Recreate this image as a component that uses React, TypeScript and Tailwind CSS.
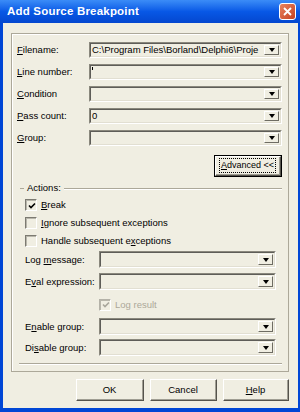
import React from 'react';

const font = { fontFamily: '"Liberation Sans", Arial, sans-serif' };

function Label({ text, u, className = '' }: { text: string; u: number; className?: string }) {
  return (
    <span className={`text-[9.5px] leading-none text-black whitespace-nowrap ${className}`}>
      {text.slice(0, u)}
      <span className="underline underline-offset-1">{text[u]}</span>
      {text.slice(u + 1)}
    </span>
  );
}

function Combo({ value, className = '' }: { value?: React.ReactNode; className?: string }) {
  return (
    <div
      className={`flex items-stretch border-t border-l border-t-[#8a887d] border-l-[#8a887d] border-b border-r border-b-white border-r-white ${className}`}
    >
      <div className="flex-1 flex items-stretch border-t border-l border-t-[#5e5d58] border-l-[#5e5d58] border-b border-r border-b-[#e2dfd2] border-r-[#e2dfd2] bg-[#f0eee2] overflow-hidden">
        <div className="flex-1 flex items-center pl-[1px] text-[9.5px] leading-none text-black whitespace-nowrap overflow-hidden">
          {value}
        </div>
        <div className="w-[15px] my-[1px] mr-[1px] flex items-center justify-center border-t border-l border-t-white border-l-white border-b border-r border-b-[#6e6c63] border-r-[#6e6c63]">
          <div className="w-0 h-0 border-l-[3.5px] border-r-[3.5px] border-t-[4px] border-l-transparent border-r-transparent border-t-black" />
        </div>
      </div>
    </div>
  );
}

function Check({ checked, disabled }: { checked?: boolean; disabled?: boolean }) {
  const c = disabled ? '#a8a69b' : '#000';
  return (
    <div
      className={`w-[12px] h-[12px] shrink-0 flex items-center justify-center border-t border-l border-b border-r ${
        disabled ? 'border-t-[#b4b2a8] border-l-[#b4b2a8] border-b-white border-r-white' : 'border-t-[#7c7a71] border-l-[#7c7a71] border-b-white border-r-white'
      }`}
    >
      <div className="w-full h-full border-t border-l border-t-[#b8b6ab] border-l-[#b8b6ab] flex items-center justify-center">
        {checked && (
          <svg width="8" height="8" viewBox="0 0 8 8">
            <path d="M1 3.5 L3 5.5 L7 1.5" stroke={c} strokeWidth="1.6" fill="none" />
          </svg>
        )}
      </div>
    </div>
  );
}

function Button({ children, className = '' }: { children: React.ReactNode; className?: string }) {
  return (
    <div
      className={`h-[22px] flex items-center justify-center border-t border-l border-t-white border-l-white border-b border-r border-b-[#55534c] border-r-[#55534c] ${className}`}
    >
      <div className="w-full h-full flex items-center justify-center border-b border-r border-b-[#a09e93] border-r-[#a09e93] text-[9.5px] leading-none text-black">
        {children}
      </div>
    </div>
  );
}

export default function App() {
  return (
    <div className="w-[300px] h-[412px] flex flex-col bg-[#0046d5] overflow-hidden text-[9.5px] leading-none" style={font}>
      {/* title bar */}
      <div className="h-[23px] shrink-0 flex items-center justify-between pl-[7px] pr-[4px] bg-gradient-to-b from-[#3b8cf7] via-[#0858e6] to-[#0447cf]">
        <span className="text-white font-bold text-[11.5px] leading-none tracking-[0.2px]">Add Source Breakpoint</span>
        <div className="w-[17px] h-[17px] rounded-[3px] border border-white bg-gradient-to-br from-[#e8835f] to-[#c5401e] flex items-center justify-center">
          <svg width="9" height="9" viewBox="0 0 9 9">
            <path d="M1 1 L8 8 M8 1 L1 8" stroke="white" strokeWidth="1.8" />
          </svg>
        </div>
      </div>

      {/* body */}
      <div className="flex-1 ml-[3px] mr-[2px] mb-[4px] bg-[#f0eee2] flex flex-col pl-[8px] pr-[9px] pt-[10px]">
        <div className="h-[339px] border border-[#aca899] shadow-[inset_1px_1px_0_white] flex flex-col pl-[5px] pr-[6px] pt-[8px]">
          <div className="flex flex-col gap-[6px]">
            {[
              { t: 'Filename:', u: 0, v: 'C:\\Program Files\\Borland\\Delphi6\\Proje' },
              { t: 'Line number:', u: 0, v: <span className="inline-block w-[1px] h-[3px] bg-black self-start mt-[1px]" /> },
              { t: 'Condition', u: 0 },
              { t: 'Pass count:', u: 0, v: '0' },
              { t: 'Group:', u: 0 },
            ].map((r) => (
              <div key={r.t} className="flex items-center h-[16px]">
                <div className="w-[72px] flex items-center">
                  <Label text={r.t} u={r.u} />
                </div>
                <Combo value={r.v} className="flex-1 h-[16px]" />
              </div>
            ))}
          </div>

          <div className="flex justify-end mt-[9px]">
            <div className="w-[68px] h-[22px] border border-black">
              <Button className="w-full h-full">
                <span className="border border-dotted border-black px-[1px] py-[2px] text-[9px] whitespace-nowrap">
                  <span className="underline underline-offset-1">A</span>dvanced &lt;&lt;
                </span>
              </Button>
            </div>
          </div>

          {/* Actions */}
          <div className="flex items-center mt-[5px] h-[12px]">
            <div className="w-[4px] h-[1px] bg-[#aca899] ml-[3px]" />
            <span className="text-[9.5px] leading-none text-black px-[3px]">Actions:</span>
            <div className="flex-1 h-[1px] bg-[#aca899] shadow-[0_1px_0_white]" />
          </div>

          <div className="flex flex-col gap-[6px] mt-[5px] pl-[8px]">
            <div className="flex items-center gap-[4px]">
              <Check checked />
              <Label text="Break" u={0} />
            </div>
            <div className="flex items-center gap-[4px]">
              <Check />
              <Label text="Ignore subsequent exceptions" u={0} />
            </div>
            <div className="flex items-center gap-[4px]">
              <Check />
              <Label text="Handle subsequent exceptions" u={19} />
            </div>
          </div>

          <div className="flex flex-col mt-[4px] pl-[8px] pr-[6px]">
            <div className="flex items-center h-[17px]">
              <div className="w-[74px] flex items-center">
                <Label text="Log message:" u={4} />
              </div>
              <Combo className="flex-1 h-[17px]" />
            </div>
            <div className="flex items-center h-[17px] mt-[5px]">
              <div className="w-[74px] flex items-center">
                <Label text="Eval expression:" u={1} />
              </div>
              <Combo className="flex-1 h-[17px]" />
            </div>
            <div className="flex items-center gap-[4px] ml-[74px] mt-[9px] h-[11px]">
              <Check checked disabled />
              <span className="text-[9.5px] leading-none text-[#aca899]">Log result</span>
            </div>
            <div className="flex items-center h-[17px] mt-[8px]">
              <div className="w-[74px] flex items-center">
                <Label text="Enable group:" u={1} />
              </div>
              <Combo className="flex-1 h-[17px]" />
            </div>
            <div className="flex items-center h-[17px] mt-[4px]">
              <div className="w-[74px] flex items-center">
                <Label text="Disable group:" u={2} />
              </div>
              <Combo className="flex-1 h-[17px]" />
            </div>
          </div>

          <div className="h-[1px] bg-[#aca899] shadow-[0_1px_0_white] mt-[7px] ml-[2px]" />
        </div>

        <div className="flex justify-end gap-[6px] mt-[7px]">
          <Button className="w-[68px]">OK</Button>
          <Button className="w-[67px]">Cancel</Button>
          <Button className="w-[66px]">
            <span>
              <span className="underline underline-offset-1">H</span>elp
            </span>
          </Button>
        </div>
      </div>
    </div>
  );
}
